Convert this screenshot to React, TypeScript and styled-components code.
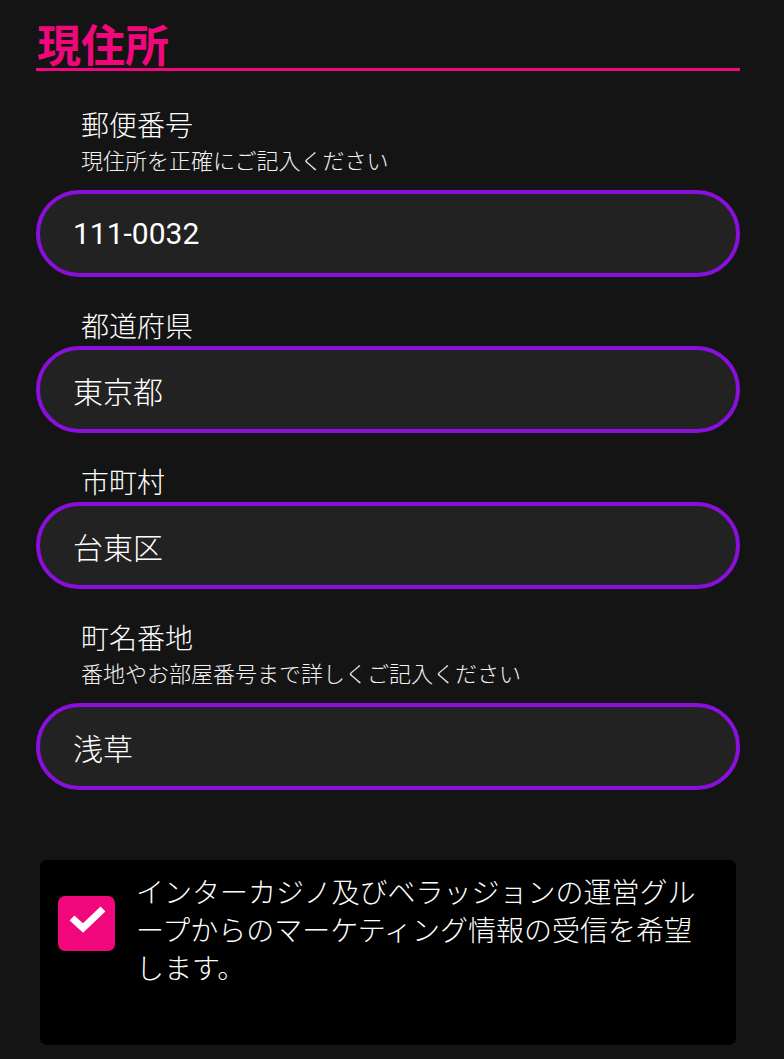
import * as React from "react";
import styled, { createGlobalStyle } from "styled-components";

const GlobalStyle = createGlobalStyle`
  html, body {
    margin: 0;
    padding: 0;
    background: #141414;
  }
  body {
    font-family: "Noto Sans CJK JP", "Noto Sans", sans-serif;
    font-weight: 300;
    color: #fff;
  }
`;

const Page = styled.div`
  width: 784px;
  height: 1059px;
  box-sizing: border-box;
  padding: 18px 44px 0 36px;
  background: #141414;
  overflow: hidden;
`;

const Heading = styled.h2`
  margin: 0;
  padding-left: 1px;
  font-size: 44px;
  line-height: 50px;
  font-weight: 700;
  color: #f0077b;
  border-bottom: 3px solid #f0077b;
`;

const Fields = styled.div`
  display: flex;
  flex-direction: column;
  gap: 31px;
  padding-top: 36px;
`;

const Field = styled.div`
  display: flex;
  flex-direction: column;
`;

const Label = styled.div`
  padding-left: 45px;
  font-size: 28px;
  line-height: 34px;
  margin-bottom: 4px;
`;

const Hint = styled.div`
  padding-left: 45px;
  font-size: 22px;
  line-height: 28px;
  margin-bottom: 17px;
  color: #f2f2f2;
`;

const Input = styled.input<{ $latin?: boolean }>`
  box-sizing: border-box;
  width: 704px;
  height: 87px;
  border: 4px solid #8a0fdc;
  border-radius: 44px;
  background: #222222;
  color: #fff;
  padding: 0 0 0 33px;
  font-family: Roboto, "Noto Sans CJK JP", sans-serif;
  font-size: 30px;
  font-weight: ${(p) => (p.$latin ? 400 : 300)};
  outline: none;
`;

const ConsentBox = styled.div`
  box-sizing: border-box;
  margin: 70px 0 0 4px;
  width: 696px;
  height: 185px;
  background: #000;
  border-radius: 7px;
  display: flex;
  align-items: flex-start;
  gap: 21px;
  padding: 12px 24px 0 18px;
`;

const CheckBox = styled.div`
  flex: none;
  width: 57px;
  height: 55px;
  margin-top: 24px;
  background: #f0077b;
  border-radius: 7px;
  display: flex;
`;

const ConsentText = styled.div`
  font-size: 28px;
  line-height: 38px;
  color: #fff;
`;

const fields = [
  { label: "郵便番号", hint: "現住所を正確にご記入ください", value: "111-0032", latin: true },
  { label: "都道府県", value: "東京都" },
  { label: "市町村", value: "台東区" },
  { label: "町名番地", hint: "番地やお部屋番号まで詳しくご記入ください", value: "浅草" },
];

const App: React.FC = () => (
  <Page>
    <GlobalStyle />
    <Heading>現住所</Heading>
    <Fields>
      {fields.map((f) => (
        <Field key={f.label}>
          <Label>{f.label}</Label>
          {f.hint && <Hint>{f.hint}</Hint>}
          <Input defaultValue={f.value} $latin={f.latin} />
        </Field>
      ))}
    </Fields>
    <ConsentBox>
      <CheckBox>
        <svg width="57" height="55" viewBox="0 0 57 55">
          <polyline
            points="14,22 25,32 45,13"
            fill="none"
            stroke="#fff"
            strokeWidth="7"
          />
        </svg>
      </CheckBox>
      <ConsentText>
        インターカジノ及びベラッジョンの運営グループからのマーケティング情報の受信を希望します。
      </ConsentText>
    </ConsentBox>
  </Page>
);

export default App;
